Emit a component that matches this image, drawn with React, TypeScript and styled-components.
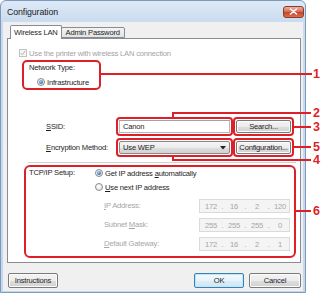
import React from 'react';
import styled, { createGlobalStyle } from 'styled-components';

const RED = '#de1f27';

const GlobalStyle = createGlobalStyle`
  html, body {
    margin: 0;
    padding: 0;
    background: #ffffff;
  }
  body {
    font-family: 'Liberation Sans', Arial, sans-serif;
    font-size: 7.6px;
    letter-spacing: -0.2px;
    color: #1e1e1e;
  }
  * {
    box-sizing: border-box;
  }
`;

const Radio: React.FC<{ checked?: boolean }> = ({ checked }) => <RadioDot $checked={checked} />;

const Octets: React.FC<{ value: string }> = ({ value }) => {
  const parts = value.split('.');
  return (
    <IpBox>
      {parts.map((p, i) => (
        <React.Fragment key={i}>
          {i > 0 && <IpDot>.</IpDot>}
          <Octet>{p}</Octet>
        </React.Fragment>
      ))}
    </IpBox>
  );
};

const callouts = [
  { n: '1', y: 74 },
  { n: '2', y: 113 },
  { n: '3', y: 127 },
  { n: '5', y: 147 },
  { n: '4', y: 160 },
  { n: '6', y: 211 },
];

export default function App() {
  return (
    <Stage>
      <GlobalStyle />
      <Window>
        <TitleBar>
          <span>Configuration</span>
          <CloseButton>
            <svg width="9" height="7" viewBox="0 0 9 7">
              <path d="M1.5 1 L7.5 6 M7.5 1 L1.5 6" stroke="#fff" strokeWidth="1.6" strokeLinecap="round" />
            </svg>
          </CloseButton>
        </TitleBar>
        <Client>
          <Tabs>
            <Tab $active>Wireless LAN</Tab>
            <Tab>Admin Password</Tab>
          </Tabs>
          <Panel>
            <CheckRow>
              <CheckBox>
                <svg width="6" height="6" viewBox="0 0 6 6">
                  <path d="M0.8 3.2 L2.3 4.8 L5.3 0.9" stroke="#b0b0b0" strokeWidth="1" fill="none" />
                </svg>
              </CheckBox>
              <span>Use the printer with wireless LAN connection</span>
            </CheckRow>

            <NetworkGroup>
              <Line>Network Type:</Line>
              <RadioRow $indent={8}>
                <Radio checked />
                <span>Infrastructure</span>
              </RadioRow>
            </NetworkGroup>

            <FormGrid>
              <Line>
                <Key>S</Key>SID:
              </Line>
              <Highlight>
                <TextInput>Canon</TextInput>
              </Highlight>
              <Highlight>
                <Button>Search...</Button>
              </Highlight>

              <Line>
                <Key>E</Key>ncryption Method:
              </Line>
              <Highlight>
                <Select>
                  <span>Use WEP</span>
                  <svg width="6" height="4" viewBox="0 0 6 4">
                    <path d="M0 0 H6 L3 3.5 Z" fill="#222" />
                  </svg>
                </Select>
              </Highlight>
              <Highlight>
                <Button>Configuration...</Button>
              </Highlight>
            </FormGrid>

            <Separator />

            <TcpGroup>
              <OptionsGrid>
                <Line>TCP/IP Setup:</Line>
                <RadioRow>
                  <Radio checked />
                  <span>
                    Get IP address <Key>a</Key>utomatically
                  </span>
                </RadioRow>
                <span />
                <RadioRow>
                  <Radio />
                  <span>
                    <Key>U</Key>se next IP address
                  </span>
                </RadioRow>
              </OptionsGrid>
              <IpGrid>
                <DimLabel>
                  <Key>I</Key>P Address:
                </DimLabel>
                <Octets value="172.16.2.120" />
                <DimLabel>
                  Subnet <Key>M</Key>ask:
                </DimLabel>
                <Octets value="255.255.255.0" />
                <DimLabel>
                  <Key>D</Key>efault Gateway:
                </DimLabel>
                <Octets value="172.16.2.1" />
              </IpGrid>
            </TcpGroup>
          </Panel>

          <BottomBar>
            <Button $width={50}>Instructions</Button>
            <Spacer />
            <Button $width={50} $default>
              OK
            </Button>
            <Button $width={52}>Cancel</Button>
          </BottomBar>
        </Client>
      </Window>

      <Leaders width="328" height="295" viewBox="0 0 328 295">
        <g stroke={RED} strokeWidth="2" fill="none">
          <path d="M101 74 H312" />
          <path d="M173 117 V113 H311" />
          <path d="M293 127 H311" />
          <path d="M293 147 H311" />
          <path d="M173 157 V160 H311" />
          <path d="M296 211 H311" />
        </g>
      </Leaders>
      {callouts.map((c) => (
        <Callout key={c.n} $y={c.y}>
          {c.n}
        </Callout>
      ))}
    </Stage>
  );
}

const Stage = styled.div`
  position: relative;
  width: 328px;
  height: 295px;
  overflow: hidden;
`;

const Window = styled.div`
  width: 306px;
  height: 293px;
  display: flex;
  flex-direction: column;
  border: 1px solid #7d99bb;
  border-radius: 6px 6px 0 0;
  background: linear-gradient(#dde9f6, #c9dbef 22px, #c4d7ed);
`;

const TitleBar = styled.div`
  height: 21px;
  display: flex;
  align-items: center;
  padding-left: 6px;
  font-size: 8.8px;
  letter-spacing: -0.1px;
  color: #1a1a1a;
`;

const CloseButton = styled.div`
  margin-left: auto;
  margin-right: 1px;
  width: 21px;
  height: 12px;
  display: flex;
  align-items: center;
  justify-content: center;
  border: 1px solid #8a3b2c;
  border-radius: 3px;
  background: linear-gradient(#eab0a1, #d86a52 48%, #c7432a 52%, #d8704f);
`;

const Client = styled.div`
  flex: 1;
  margin: 0 2px 1px 2px;
  padding: 3px 2px 0 4px;
  display: flex;
  flex-direction: column;
  background: #f0f0f0;
`;

const Tabs = styled.div`
  position: relative;
  z-index: 1;
  height: 14px;
  margin: 0 0 -1px 3px;
  display: flex;
  align-items: flex-end;
`;

const Tab = styled.div<{ $active?: boolean }>`
  height: ${(p) => (p.$active ? 14 : 11)}px;
  margin-bottom: ${(p) => (p.$active ? 0 : 1)}px;
  margin-left: ${(p) => (p.$active ? 0 : -1)}px;
  padding: 0 ${(p) => (p.$active ? 3 : 4)}px;
  display: flex;
  align-items: center;
  border: 1px solid #898c95;
  border-bottom: ${(p) => (p.$active ? 'none' : '1px solid #898c95')};
  border-radius: 2px 2px 0 0;
  background: ${(p) => (p.$active ? '#ffffff' : 'linear-gradient(#f3f3f3, #e3e3e3)')};
  white-space: nowrap;
`;

const Panel = styled.div`
  height: 225px;
  display: flex;
  flex-direction: column;
  border: 1px solid #898c95;
  background: #ffffff;
`;

const CheckRow = styled.div`
  height: 10px;
  margin: 9px 0 0 11px;
  display: flex;
  align-items: center;
  gap: 2px;
  color: #a3a3a3;
  white-space: nowrap;
`;

const CheckBox = styled.span`
  width: 8px;
  height: 8px;
  display: flex;
  align-items: center;
  justify-content: center;
  border: 1px solid #c2c2c2;
  background: #f6f6f6;
`;

const Line = styled.div`
  height: 10px;
  line-height: 10px;
  white-space: nowrap;
`;

const DimLabel = styled(Line)`
  color: #a6a6a6;
`;

const Key = styled.span`
  text-decoration: underline;
`;

const NetworkGroup = styled.div`
  width: 79px;
  height: 30px;
  margin: 2px 0 0 14px;
  padding: 1px 0 0 5px;
  display: flex;
  flex-direction: column;
  gap: 4px;
  border: 2px solid ${RED};
  border-radius: 5px;
`;

const RadioRow = styled.div<{ $indent?: number }>`
  height: 10px;
  padding-left: ${(p) => p.$indent ?? 0}px;
  display: flex;
  align-items: center;
  gap: 2px;
  white-space: nowrap;
`;

const RadioDot = styled.span<{ $checked?: boolean }>`
  position: relative;
  width: 8px;
  height: 8px;
  flex: none;
  border: 1px solid #8b8b8b;
  border-radius: 50%;
  background: radial-gradient(circle at 40% 40%, #ffffff, #dcdcdc);

  &::after {
    content: '';
    display: ${(p) => (p.$checked ? 'block' : 'none')};
    position: absolute;
    left: 1px;
    top: 1px;
    width: 4px;
    height: 4px;
    border-radius: 50%;
    background: radial-gradient(circle at 40% 35%, #a9d0f5, #2c6fb7 70%, #1d4f8c);
  }
`;

const FormGrid = styled.div`
  margin: 27px 0 0 38px;
  display: grid;
  grid-template-columns: 70px 117px 61px;
  grid-auto-rows: 19px;
  row-gap: 2px;
  align-items: center;
`;

const Highlight = styled.div`
  height: 19px;
  padding: 1px;
  display: flex;
  border: 2px solid ${RED};
  border-radius: 4px;
`;

const TextInput = styled.div`
  flex: 1;
  padding-left: 3px;
  display: flex;
  align-items: center;
  border: 1px solid #b5b9c2;
  border-top-color: #9da1aa;
  background: #ffffff;
`;

const Select = styled.div`
  flex: 1;
  padding: 0 3px 0 3px;
  display: flex;
  align-items: center;
  justify-content: space-between;
  border: 1px solid #8a8a8a;
  border-radius: 2px;
  background: linear-gradient(#f4f4f4, #ececec 50%, #dedede 51%, #d2d2d2);
`;

const Button = styled.div<{ $width?: number; $default?: boolean }>`
  ${(p) => (p.$width ? `width: ${p.$width}px; height: 15px;` : 'flex: 1;')}
  display: flex;
  align-items: center;
  justify-content: center;
  border: 1px solid ${(p) => (p.$default ? '#3c7fb1' : '#7a7a7a')};
  border-radius: 2px;
  box-shadow: inset 0 0 0 1px ${(p) => (p.$default ? '#bfe6fb' : '#fbfbfb')};
  background: ${(p) =>
    p.$default
      ? 'linear-gradient(#f3f9fd, #e8f4fb 50%, #dcedf8 51%, #d0e6f5)'
      : 'linear-gradient(#f4f4f4, #ececec 50%, #dedede 51%, #d2d2d2)'};
  white-space: nowrap;
`;

const Separator = styled.div`
  height: 1px;
  margin: 5px 4px 0 20px;
  background: #d0d0d0;
`;

const TcpGroup = styled.div`
  width: 272px;
  height: 93px;
  margin: 2px 0 0 16px;
  padding: 1px 0 0 3px;
  display: flex;
  flex-direction: column;
  border: 2px solid ${RED};
  border-radius: 6px;
`;

const OptionsGrid = styled.div`
  display: grid;
  grid-template-columns: 66px auto;
  grid-auto-rows: 10px;
  row-gap: 4px;
`;

const IpGrid = styled.div`
  margin-top: 7px;
  padding-left: 75px;
  display: grid;
  grid-template-columns: 95px 91px;
  grid-auto-rows: 14px;
  row-gap: 5px;
  align-items: center;
`;

const IpBox = styled.div`
  height: 14px;
  padding-left: 2px;
  display: flex;
  align-items: center;
  border: 1px solid #dadada;
  background: #f4f4f4;
  color: #a6a6a6;
`;

const Octet = styled.span`
  width: 18px;
  text-align: center;
`;

const IpDot = styled.span`
  flex: 1;
  text-align: center;
`;

const BottomBar = styled.div`
  height: 15px;
  margin: 10px 0 0 1px;
  display: flex;
  gap: 5px;
`;

const Spacer = styled.div`
  flex: 1;
`;

const Leaders = styled.svg`
  position: absolute;
  left: 0;
  top: 0;
  pointer-events: none;
`;

const Callout = styled.div<{ $y: number }>`
  position: absolute;
  left: 313px;
  top: ${(p) => p.$y - 7}px;
  height: 14px;
  display: flex;
  align-items: center;
  font-size: 12.5px;
  font-weight: bold;
  letter-spacing: 0;
  color: ${RED};
`;
